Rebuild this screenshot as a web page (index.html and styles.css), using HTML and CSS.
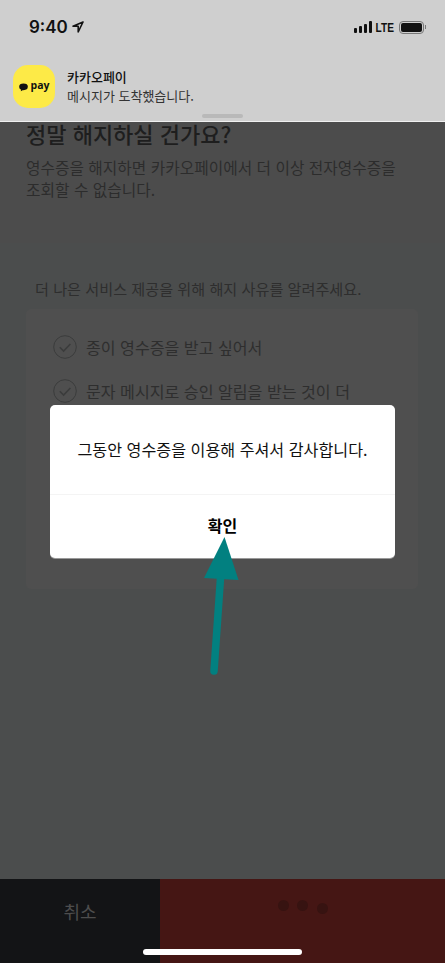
FILE: index.html
```html
<!DOCTYPE html>
<html lang="ko">
<head>
  <meta charset="UTF-8"/>
  <meta name="viewport" content="width=device-width, initial-scale=1.0"/>
  <title>카카오페이</title>
  <link rel="stylesheet" href="styles.css">
</head>
<body>
  <div class="phone">
    <header class="banner">
      <div class="status">
        <div class="clock">
          <span>9:40</span>
          <svg class="arrow-loc" viewBox="0 0 12 12"><path d="M11 1 1 5.200h5.200V11z" fill="none" stroke="#111" stroke-width="1.600" stroke-linejoin="round"/></svg>
        </div>
        <div class="status-right">
          <div class="bars"><i class="b1"></i><i class="b2"></i><i class="b3"></i><i class="b4"></i></div>
          <span class="lte">LTE</span>
          <div class="battery"><div class="battery-fill"></div></div>
          <div class="battery-cap"></div>
        </div>
      </div>
      <div class="notice">
        <div class="app-icon">
          <svg class="bubble" viewBox="0 0 10 9"><ellipse cx="5" cy="3.800" rx="4.800" ry="3.700" fill="#111"/><path d="M2.500 6 2 8.800 5 7z" fill="#111"/></svg>
          <span>pay</span>
        </div>
        <div class="notice-text">
          <strong>카카오페이</strong>
          <span>메시지가 도착했습니다.</span>
        </div>
      </div>
      <div class="grabber"></div>
    </header>

    <section class="intro">
      <h1>정말 해지하실 건가요?</h1>
      <p>영수증을 해지하면 카카오페이에서 더 이상 전자영수증을<br>조회할 수 없습니다.</p>
    </section>

    <section class="reasons">
      <p class="reasons-title">더 나은 서비스 제공을 위해 해지 사유를 알려주세요.</p>
      <div class="card">
        <div class="reason">
          <svg class="check" viewBox="0 0 24 24"><circle cx="12" cy="12" r="11.300" fill="none" stroke="#3b3c3c" stroke-width="1"/><path d="M6.800 12.200l3.800 3.800 6.800-7" fill="none" stroke="#3b3c3c" stroke-width="1.600"/></svg>
          <span>종이 영수증을 받고 싶어서</span>
        </div>
        <div class="reason">
          <svg class="check" viewBox="0 0 24 24"><circle cx="12" cy="12" r="11.300" fill="none" stroke="#3b3c3c" stroke-width="1"/><path d="M6.800 12.200l3.800 3.800 6.800-7" fill="none" stroke="#3b3c3c" stroke-width="1.600"/></svg>
          <span>문자 메시지로 승인 알림을 받는 것이 더</span>
        </div>
        <div class="other">
          <div class="other-dot"></div>
          <div class="other-input"></div>
        </div>
      </div>
    </section>

    <footer class="actions">
      <div class="btn-cancel">취소</div>
      <div class="btn-confirm">
        <i class="dot d1"></i><i class="dot d2"></i><i class="dot d3"></i>
      </div>
    </footer>

    <div class="dialog">
      <p class="dialog-msg">그동안 영수증을 이용해 주셔서 감사합니다.</p>
      <div class="dialog-btn">확인</div>
    </div>

    <!-- annotation arrow -->
    <svg class="pointer" viewBox="0 0 445 963"><path d="M214 671 220.500 578" stroke="#028080" stroke-width="7.500" stroke-linecap="round" fill="none"/><path d="M224.500 537 204 578 238.500 580z" fill="#028080"/></svg>

    <div class="home-bar"></div>
  </div>
</body>
</html>
```

FILE: styles.css
```css
* { box-sizing: border-box; }
html, body { margin: 0; padding: 0; }
body {
  background: #4b4d4d;
  font-family: "Noto Sans CJK KR", "Noto Sans", sans-serif;
}
.phone {
  position: relative;
  width: 445px; height: 963px;
  overflow: hidden;
  display: flex; flex-direction: column;
  background: #4b4d4d;
}

/* Notification banner */
.banner {
  position: relative;
  height: 122px;
  flex: none;
  background: #cfcfcf;
  border-bottom: 1px solid #f0f0f0;
  color: #111;
}
.status {
  display: flex; justify-content: space-between; align-items: center;
  height: 26px;
  margin-top: 14px;
  padding: 0 19px 0 29px;
}
.clock {
  display: flex; align-items: center; gap: 4px;
  font-family: Inter, "Noto Sans", sans-serif;
  font-size: 17px; font-weight: 600;
}
.arrow-loc { width: 12px; height: 12px; }
.status-right { display: flex; align-items: center; }
.bars { display: flex; align-items: flex-end; gap: 1.500px; height: 12px; margin-right: 1px; }
.bars i { display: block; width: 3.500px; background: #111; border-radius: 1px; }
.b1 { height: 5px; } .b2 { height: 7px; } .b3 { height: 9px; } .b4 { height: 12px; }
.lte {
  font-family: "Liberation Sans", sans-serif;
  font-size: 13px; font-weight: 700;
  margin-right: 2px;
  transform: scaleX(0.78);
}
.battery {
  width: 25px; height: 13px;
  border: 1px solid #777;
  border-radius: 4px;
  padding: 1px;
}
.battery-fill { width: 100%; height: 100%; background: #111; border-radius: 2px; }
.battery-cap { width: 1px; height: 4px; margin-left: 1px; background: #777; }

.notice {
  display: flex; align-items: center; gap: 12px;
  position: absolute; left: 13px; top: 65px;
}
.app-icon {
  width: 42px; height: 43px;
  background: #fdea47;
  border-radius: 15px;
  display: flex; align-items: center; justify-content: center; gap: 3px;
  font-family: "Open Sans", sans-serif;
  font-size: 10.500px; font-weight: 700;
  color: #111;
}
.bubble { width: 9px; height: 9px; margin-top: 1px; }
.app-icon span { line-height: 1; margin-top: -2px; }
.notice-text { display: flex; flex-direction: column; font-size: 13px; line-height: 19px; margin-top: -2px; }
.notice-text strong { font-weight: 500; color: #111; }
.notice-text span { color: #333; }
.grabber {
  position: absolute; left: 202px; bottom: 3px;
  width: 41px; height: 4px;
  background: #b9b9b9;
  border-radius: 2px;
}

/* Dimmed page underneath */
.intro {
  height: 121px;
  flex: none;
  padding: 0 26px;
  background: #4c4c4c;
  color: #2c2c2c;
}
.intro h1 {
  margin: -4px 0 0;
  font-size: 22px; font-weight: 500;
  line-height: 30px;
  color: #1e1e1e;
}
.intro p {
  margin: 9px 0 0;
  font-size: 15.750px;
  line-height: 22px;
  color: #2c2c2c;
}
.reasons { flex: 1; padding: 34px 26px 0; }
.reasons-title {
  margin: 0 0 10px 9px;
  font-size: 15.150px; line-height: 22px;
  color: #2e2e2e;
}
.card {
  width: 392px; height: 280px;
  padding: 26px 27px 0;
  background: #4f4f4f;
  border-radius: 5px;
}
.reason {
  display: flex; align-items: center; gap: 9px;
  height: 24px; margin-bottom: 20px;
  font-size: 16.100px;
  color: #2e2e2e;
}
.check { width: 24px; height: 24px; flex: none; }
.other {
  display: flex; align-items: flex-end;
  margin-top: 110px;
}
.other-dot {
  width: 21px; height: 21px;
  margin: 0 0 2px 2px;
  border-radius: 50%;
  background: #5f5200;
}
.other-input {
  width: 246px; height: 30px;
  margin-left: 71px;
  border: 1px solid #3d3e3e;
}

.actions { display: flex; height: 84px; flex: none; }
.btn-cancel {
  width: 160px;
  background: #131416;
  color: #4d4d4d;
  font-size: 18px;
  text-align: center;
  padding-top: 20px;
  line-height: 24px;
}
.btn-confirm { flex: 1; position: relative; background: #451614; }
.dot {
  position: absolute;
  width: 11px; height: 11px;
  border-radius: 50%;
  background: #371311;
}
.d1 { left: 118px; top: 21px; }
.d2 { left: 137px; top: 21px; }
.d3 { left: 157px; top: 24px; }

/* Alert on top */
.dialog {
  position: absolute; left: 50px; top: 405px;
  width: 345px; height: 153px;
  background: #fff;
  border-radius: 5px;
  box-shadow: 0 1px 0 #999;
  display: flex; flex-direction: column;
  color: #111;
}
.dialog-msg {
  margin: 0;
  height: 90px;
  padding-bottom: 2px;
  display: flex; align-items: center; justify-content: center;
  font-size: 16.170px;
  border-bottom: 1px solid #f4f4f4;
}
.dialog-btn {
  flex: 1;
  display: flex; align-items: center; justify-content: center;
  font-size: 16px; font-weight: 700;
  color: #000;
  padding-bottom: 4px;
}
.pointer { position: absolute; left: 0; top: 0; width: 445px; height: 963px; pointer-events: none; }
.home-bar {
  position: absolute; left: 143px; top: 949px;
  width: 159px; height: 6px;
  background: #fff;
  border-radius: 3px;
}
```
